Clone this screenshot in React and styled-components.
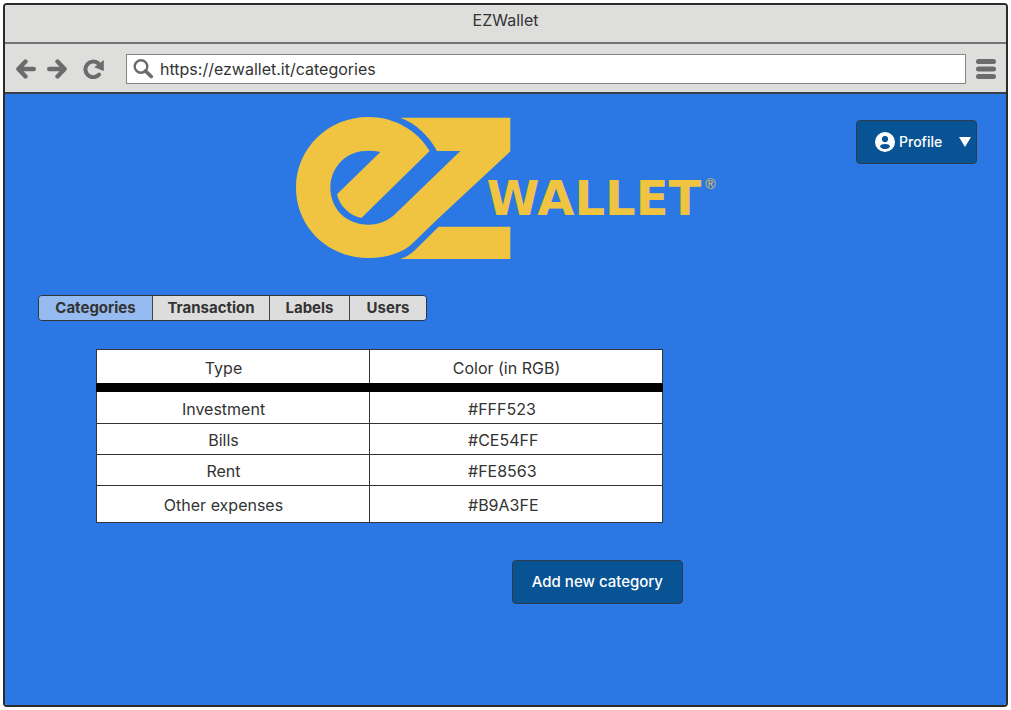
import React from "react";
import styled, { createGlobalStyle } from "styled-components";

const GlobalStyle = createGlobalStyle`
  *, *::before, *::after { box-sizing: border-box; }
  body {
    margin: 0;
    background: #fff;
    color: #333;
    font: 16px/20px Inter, "Liberation Sans", sans-serif;
  }
  button, input { font: inherit; color: inherit; }
`;

const Page = styled.div`
  display: flex;
  min-height: 100vh;
  padding: 3px;
`;

const BrowserWindow = styled.div`
  flex: 1;
  display: flex;
  flex-direction: column;
  border: 2px solid #2b2b2b;
  border-radius: 4px;
  overflow: hidden;
`;

const TitleBar = styled.div`
  height: 39px;
  padding-top: 5px;
  background: #dededd;
  border-bottom: 2px solid #747474;
  text-align: center;
`;

const Toolbar = styled.div`
  display: flex;
  align-items: center;
  height: 50px;
  padding: 2px 10px 0 11px;
  background: #dededd;
  border-bottom: 2px solid #3a3f48;
`;

const IconButton = styled.button`
  display: flex;
  margin: 0 ${(p) => p.$gap || 0}px 0 0;
  padding: 0;
  border: 0;
  background: none;
  color: #6b6b6b;
`;

const AddressBar = styled.label`
  flex: 1;
  display: flex;
  align-items: center;
  gap: 6px;
  height: 30px;
  margin-right: 10px;
  padding-left: 6px;
  background: #fff;
  border: 1px solid #858585;
  color: #6b6b6b;
`;

const AddressInput = styled.input`
  flex: 1;
  min-width: 0;
  padding: 0;
  border: 0;
  outline: 0;
  background: none;
  color: #333;
`;

const Content = styled.main`
  flex: 1;
  background: #2b78e4;
`;

const Header = styled.header`
  display: grid;
  grid-template-columns: 1fr auto 1fr;
  align-items: start;
  padding: 23px 29px 0;
`;

const Logo = styled.h1`
  grid-column: 2;
  display: flex;
  margin: 0;
  color: #f0c440;
`;

const Wordmark = styled.span`
  display: flex;
  align-items: flex-start;
  margin: 54px 0 0 -24px;
  font: bold 48px/54px "DejaVu Sans", sans-serif;
`;

const Registered = styled.span`
  margin-left: 4px;
  font: 14px/26px "Liberation Sans", sans-serif;
`;

const PrimaryButton = styled.button`
  display: flex;
  align-items: center;
  height: 44px;
  padding: 0 19px;
  border: 1px solid #2f3b48;
  border-radius: 4px;
  background: #085394;
  color: #fff;
  font-size: 15px;
  font-weight: 500;
  white-space: nowrap;
`;

const ProfileButton = styled(PrimaryButton)`
  justify-self: end;
  margin-top: 3px;
  width: 121px;
  padding: 0 5px 0 18px;
  gap: 4px;
  font-size: 14px;

  svg:last-child { margin-left: auto; }
`;

const Tabs = styled.nav`
  display: inline-grid;
  grid-template-columns: 113px 117px 80px 77px;
  margin: 36px 0 0 33px;
  border: 1px solid #333;
  border-radius: 4px;
  overflow: hidden;
  vertical-align: top;
`;

const Tab = styled.a`
  height: 24px;
  background: ${(p) => (p.$active ? "#95bbf1" : "#dddddd")};
  color: #333;
  font-size: 15px;
  font-weight: 700;
  line-height: 24px;
  text-align: center;
  text-decoration: none;

  & + & { border-left: 1px solid #444; }
`;

const Categories = styled.section`
  display: flex;
  flex-direction: column;
  max-width: 587px;
  margin: 28px 0 0 91px;
`;

const Table = styled.table`
  width: 100%;
  max-width: 567px;
  border-collapse: collapse;
  table-layout: fixed;
  background: #fff;
`;

const HeadCell = styled.th`
  width: ${(p) => p.$width || "auto"};
  height: 38px;
  padding: 2px 19px 0 0;
  border: 1px solid #333;
  border-bottom: 9px solid #000;
  font-weight: 400;
`;

const Row = styled.tr`
  height: ${(p) => p.$height}px;
`;

const Cell = styled.td`
  padding: 2px 19px 0 0;
  border: 1px solid #333;
  text-align: center;
`;

const ColorCell = styled(Cell)`
  padding: 2px 0 0 98px;
  text-align: left;
`;

const AddButton = styled(PrimaryButton)`
  align-self: flex-end;
  margin-top: 37px;
`;

const categories = [
  { type: "Investment", color: "#FFF523", height: 36 },
  { type: "Bills", color: "#CE54FF", height: 31 },
  { type: "Rent", color: "#FE8563", height: 31 },
  { type: "Other expenses", color: "#B9A3FE", height: 37 },
];

const tabs = ["Categories", "Transaction", "Labels", "Users"];

const ArrowIcon = ({ right }) => (
  <svg width="20" height="20" viewBox="0 0 20 20" fill="none" stroke="currentColor" strokeWidth="4.4" strokeLinecap="round" strokeLinejoin="round">
    {right ? <path d="M2.2 10H17M10.5 2.6L17.6 10L10.5 17.4" /> : <path d="M17.8 10H3M9.5 2.6L2.4 10L9.5 17.4" />}
  </svg>
);

const ReloadIcon = () => (
  <svg width="21" height="20" viewBox="0 0 21 20">
    <path d="M15 4.2A7.8 7.8 0 1 0 16 15.6" fill="none" stroke="currentColor" strokeWidth="4" strokeLinecap="round" />
    <path d="M20.8 1V12L11.3 8.2Z" fill="currentColor" />
  </svg>
);

const SearchIcon = () => (
  <svg width="21" height="20" viewBox="0 0 21 20" fill="none" stroke="currentColor">
    <circle cx="8" cy="7.5" r="6.3" strokeWidth="2.4" />
    <path d="M12.5 12L18.2 17.5" strokeWidth="3.8" strokeLinecap="round" />
  </svg>
);

const MenuIcon = () => (
  <svg width="20" height="20" viewBox="0 0 20 20" fill="currentColor">
    <rect y="0" width="20" height="5" rx="2.5" />
    <rect y="7.5" width="20" height="5" rx="2.5" />
    <rect y="15" width="20" height="5" rx="2.5" />
  </svg>
);

const UserIcon = () => (
  <svg width="20" height="20" viewBox="0 0 20 20">
    <circle cx="10" cy="10" r="10" fill="#fff" />
    <circle cx="10" cy="7.1" r="3.1" fill="#085394" />
    <path d="M5 14.7C5.2 12.6 7.2 12 10 12S14.8 12.6 15 14.7C13.8 16.2 12 17 10 17S6.2 16.2 5 14.7Z" fill="#085394" />
  </svg>
);

const CaretIcon = () => (
  <svg width="12" height="10" viewBox="0 0 12 10">
    <path d="M0 0H12L6 10Z" fill="#fff" />
  </svg>
);

const Monogram = () => (
  <svg width="215" height="142" viewBox="45 51 645 426" fill="currentColor" role="img" aria-label="EZ">
    <path d="M446 153C408 90 340 51 262 51C140 51 45 146 45 263C45 380 140 474 262 474C315 474 364 460 395 430L470 357L688 154V53H358C405 70 444 108 468 153H538L345 340C321 363 296 374 262 374C195 374 148 325 148 263C148 203 195 155 250 153Q276 151 298 156L168 283C175 318 206 347 241 354Z" />
    <path d="M473 380H688V477H358C374 472 388 463 400 452Z" />
  </svg>
);

export default function App() {
  return (
    <>
      <GlobalStyle />
      <Page>
        <BrowserWindow>
          <TitleBar>EZWallet</TitleBar>
          <Toolbar>
            <IconButton $gap={11} aria-label="Back"><ArrowIcon /></IconButton>
            <IconButton $gap={16} aria-label="Forward"><ArrowIcon right /></IconButton>
            <IconButton $gap={22} aria-label="Reload"><ReloadIcon /></IconButton>
            <AddressBar>
              <SearchIcon />
              <AddressInput aria-label="Address" defaultValue="https://ezwallet.it/categories" />
            </AddressBar>
            <IconButton aria-label="Menu"><MenuIcon /></IconButton>
          </Toolbar>
          <Content>
            <Header>
              <Logo>
                <Monogram />
                <Wordmark>WALLET<Registered>®</Registered></Wordmark>
              </Logo>
              <ProfileButton>
                <UserIcon />
                Profile
                <CaretIcon />
              </ProfileButton>
            </Header>
            <Tabs>
              {tabs.map((name, i) => (
                <Tab key={name} href={`#${name.toLowerCase()}`} $active={i === 0}>{name}</Tab>
              ))}
            </Tabs>
            <Categories>
              <Table>
                <thead>
                  <tr>
                    <HeadCell $width="273px">Type</HeadCell>
                    <HeadCell>Color (in RGB)</HeadCell>
                  </tr>
                </thead>
                <tbody>
                  {categories.map((c) => (
                    <Row key={c.type} $height={c.height}>
                      <Cell>{c.type}</Cell>
                      <ColorCell>{c.color}</ColorCell>
                    </Row>
                  ))}
                </tbody>
              </Table>
              <AddButton>Add new category</AddButton>
            </Categories>
          </Content>
        </BrowserWindow>
      </Page>
    </>
  );
}
